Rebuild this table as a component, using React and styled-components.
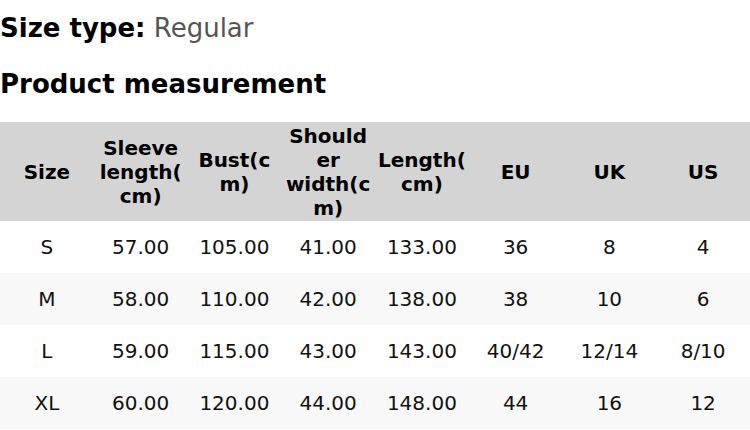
import React from "react";
import styled, { createGlobalStyle } from "styled-components";

const GlobalStyle = createGlobalStyle`
  html, body {
    margin: 0;
    padding: 0;
    background: #ffffff;
  }
  body {
    font-family: "DejaVu Sans", Verdana, sans-serif;
    color: #000;
  }
`;

const Page = styled.div`
  width: 750px;
  padding-top: 13px;
  font-family: "DejaVu Sans", Verdana, sans-serif;
`;

const SizeType = styled.p`
  margin: 0;
  font-size: 26px;
  line-height: 30px;
  color: #000;
  white-space: nowrap;
`;

const Label = styled.strong`
  font-weight: 700;
`;

const Value = styled.span`
  color: #555555;
  font-weight: 400;
`;

const Title = styled.h2`
  margin: 26px 0 23px;
  font-size: 26px;
  line-height: 30px;
  font-weight: 700;
  color: #000;
`;

const Table = styled.table`
  width: 750px;
  table-layout: fixed;
  border-collapse: collapse;
  border-spacing: 0;
`;

const HeadRow = styled.tr`
  background: #d4d4d4;
`;

const HeadCell = styled.th`
  padding: 2px 2px 1px;
  font-size: 20px;
  line-height: 24px;
  font-weight: 700;
  color: #000;
  text-align: center;
  vertical-align: middle;
  overflow-wrap: break-word;
  word-wrap: break-word;
`;

const Row = styled.tr`
  background: ${(p) => (p.$striped ? "#f8f8f8" : "#ffffff")};
`;

const Cell = styled.td`
  padding: 14px 2px;
  font-size: 20px;
  line-height: 24px;
  color: #111;
  text-align: center;
  vertical-align: middle;
  white-space: nowrap;
`;

const headers = [
  "Size",
  "Sleeve length(cm)",
  "Bust(cm)",
  "Shoulder width(cm)",
  "Length(cm)",
  "EU",
  "UK",
  "US",
];

const rows = [
  ["S", "57.00", "105.00", "41.00", "133.00", "36", "8", "4"],
  ["M", "58.00", "110.00", "42.00", "138.00", "38", "10", "6"],
  ["L", "59.00", "115.00", "43.00", "143.00", "40/42", "12/14", "8/10"],
  ["XL", "60.00", "120.00", "44.00", "148.00", "44", "16", "12"],
];

export default function App() {
  return (
    <Page>
      <GlobalStyle />
      <SizeType>
        <Label>Size type:</Label> <Value>Regular</Value>
      </SizeType>
      <Title>Product measurement</Title>
      <Table>
        <thead>
          <HeadRow>
            {headers.map((h) => (
              <HeadCell key={h}>{h}</HeadCell>
            ))}
          </HeadRow>
        </thead>
        <tbody>
          {rows.map((r, i) => (
            <Row key={r[0]} $striped={i % 2 === 1}>
              {r.map((c, j) => (
                <Cell key={j}>{c}</Cell>
              ))}
            </Row>
          ))}
        </tbody>
      </Table>
    </Page>
  );
}
